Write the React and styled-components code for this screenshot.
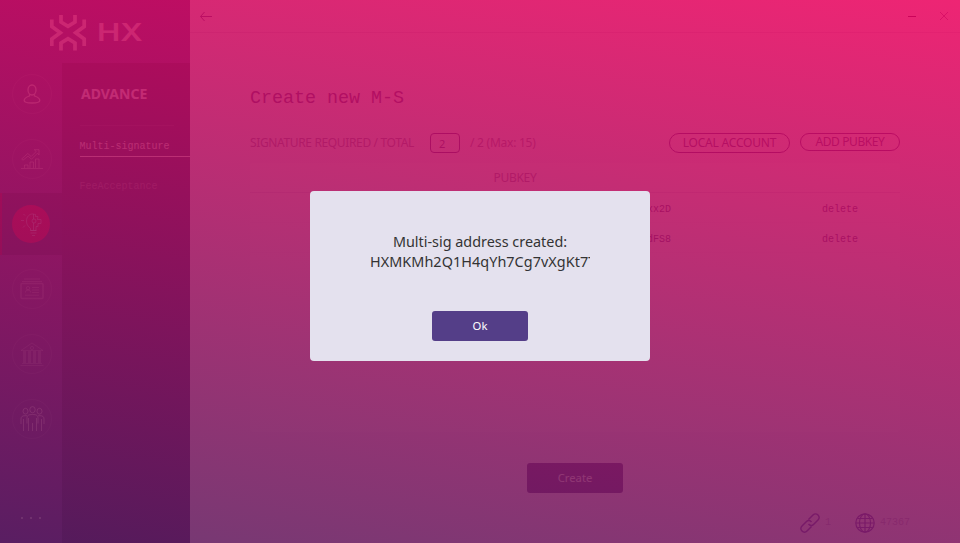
import React from "react";
import styled, { createGlobalStyle } from "styled-components";

const Global = createGlobalStyle`
  * { box-sizing: border-box; }
  body { margin: 0; overflow: hidden; font-family: "Noto Sans", "Open Sans", sans-serif; }
  button { font-family: inherit; padding: 0; margin: 0; }
`;

const mono = `"Liberation Mono", monospace`;

const Window = styled.div`
  position: relative;
  display: flex;
  width: 960px;
  height: 543px;
  overflow: hidden;
  background: #f9f7fc;
`;

const Sidebar = styled.aside`
  display: flex;
  flex-direction: column;
  width: 190px;
  background: #54408a;
`;

const Brand = styled.header`
  display: flex;
  align-items: center;
  height: 63px;
  padding: 2px 0 0 50px;
  gap: 10px;
  color: #eadcf0;
`;

const BrandName = styled.span`
  font: 600 24px/30px Inter, sans-serif;
  transform: scaleX(1.3);
  transform-origin: left center;
`;

const Columns = styled.div`
  display: flex;
  flex: 1;
`;

const Rail = styled.nav`
  display: flex;
  flex-direction: column;
  gap: 3px;
  width: 62px;
`;

const RailItem = styled.div`
  display: flex;
  align-items: center;
  justify-content: center;
  height: 62px;
  padding-right: ${(p) => (p.$active ? 2 : 0)}px;
  border-left: 2px solid ${(p) => (p.$active ? "#90104a" : "transparent")};
  background: ${(p) => (p.$active ? "#2d2f66" : "transparent")};
`;

const RailCircle = styled.div`
  display: grid;
  place-items: center;
  width: ${(p) => (p.$active ? 38 : 40)}px;
  height: ${(p) => (p.$active ? 38 : 40)}px;
  border-radius: 50%;
  border: ${(p) => (p.$active ? 0 : 1)}px solid rgba(255, 255, 255, 0.14);
  background: ${(p) => (p.$active ? "#e01048" : "transparent")};
  color: rgba(255, 255, 255, ${(p) => p.$tone});
`;

const More = styled.div`
  display: flex;
  gap: 7px;
  padding: 64px 0 0 21px;
`;

const Dot = styled.i`
  width: 2px;
  height: 2px;
  background: rgba(255, 255, 255, 0.7);
`;

const SubMenu = styled.div`
  display: flex;
  flex-direction: column;
  width: 128px;
  padding: 20px 0 0 18px;
  background: #2b2c5e;
`;

const SubTitle = styled.h2`
  margin: 0 16px 0 0;
  height: 43px;
  padding-left: 1px;
  font-size: 14px;
  line-height: 22px;
  font-weight: 700;
  color: #f4f0ff;
  border-bottom: 1px solid rgba(255, 255, 255, 0.12);
`;

const SubItem = styled.div`
  height: 31px;
  margin-bottom: 9px;
  padding-top: 11px;
  font: 10px/20px ${mono};
  text-indent: -0.5px;
  color: rgba(255, 255, 255, ${(p) => (p.$active ? 0.95 : 0.35)});
  border-bottom: 1px solid ${(p) => (p.$active ? "#fff" : "transparent")};
`;

const Main = styled.main`
  display: flex;
  flex-direction: column;
  flex: 1;
  color: #7a6a9a;
`;

const TitleBar = styled.div`
  display: flex;
  align-items: center;
  height: 33px;
  padding: 0 11px 0 9px;
  border-bottom: 1px solid #dcd8e8;
  color: #54408a;
`;

const WindowControls = styled.div`
  display: flex;
  gap: 22px;
  margin-left: auto;
`;

const Content = styled.section`
  width: 650px;
  margin-left: 60px;
  height: 460px;
`;

const Title = styled.h1`
  margin: 0;
  padding-top: 53px;
  height: 100px;
  font: 400 18.35px/26px ${mono};
  color: #54408a;
`;

const Toolbar = styled.div`
  display: flex;
  height: 30px;
  font-size: 12px;
  line-height: 20px;
  color: #8b80a8;
`;

const ToolbarLabel = styled.span`
  width: 180px;
  letter-spacing: -0.36px;
  white-space: nowrap;
`;

const MaxLabel = styled.span`
  letter-spacing: -0.25px;
`;

const CountInput = styled.span`
  width: 30px;
  height: 20px;
  margin-right: 10px;
  padding-left: 8px;
  border: 1px solid #54308a;
  border-radius: 4px;
  font-size: 11px;
  line-height: 19px;
  color: #54408a;
`;

const Actions = styled.div`
  display: flex;
  gap: 10px;
  margin-left: auto;
`;

const OutlineButton = styled.button`
  width: ${(p) => p.$w}px;
  height: ${(p) => p.$h}px;
  border: 1px solid #54308a;
  border-radius: 10px;
  background: transparent;
  font-size: 12px;
  letter-spacing: ${(p) => p.$track}px;
  line-height: ${(p) => p.$h - 2}px;
  color: #54408a;
`;

const Table = styled.div`
  height: 269px;
  background: #fff;
  border-radius: 3px;
`;

const Row = styled.div`
  display: grid;
  grid-template-columns: 530px 120px;
  height: 30px;
  text-align: center;
  font: ${(p) => (p.$head ? `12px/30px "Noto Sans", sans-serif` : `10px/33px ${mono}`)};
  letter-spacing: ${(p) => (p.$head ? -0.3 : 0)}px;
  color: ${(p) => (p.$head ? "#8b80a8" : "#54408a")};
  border-bottom: 1px solid ${(p) => (p.$head ? "#e2deee" : "#fbf9fd")};
`;

const Key = styled.span`
  width: 421px;
  text-align: right;
`;

const SolidButton = styled.button`
  display: block;
  width: 96px;
  height: 30px;
  margin: ${(p) => (p.$faded ? "31px 0 0 277px" : "0")};
  border: 0;
  border-radius: 3px;
  background: #543e88;
  color: #fff;
  font-size: 11.3px;
  line-height: 30px;
`;

const StatusBar = styled.footer`
  display: flex;
  align-items: center;
  gap: 5px;
  height: 20px;
  margin: 20px 0 0 610px;
`;

const StatusItem = styled.div`
  display: flex;
  align-items: center;
  gap: 5px;
  width: 50px;
  font: 10px/20px ${mono};
  color: #b9aed0;
  svg { flex: none; color: #6444b0; }
`;

const Veil = styled.div`
  position: absolute;
  inset: 0;
  display: flex;
  justify-content: center;
  align-items: flex-start;
  padding-top: 191px;
  background: linear-gradient(10deg, rgba(90, 24, 91, 0.85), rgba(236, 0, 92, 0.85));
`;

const Dialog = styled.div`
  display: flex;
  flex-direction: column;
  align-items: center;
  width: 340px;
  height: 170px;
  padding-top: 41px;
  border-radius: 4px;
  background: #e4e1ee;
`;

const Message = styled.p`
  width: 220px;
  height: 79px;
  margin: 0;
  overflow: hidden;
  white-space: nowrap;
  text-align: center;
  font-size: 14.4px;
  line-height: 20px;
  color: #333;
`;

const Address = styled.span`
  display: block;
  text-align: left;
  letter-spacing: 0.06px;
`;

const Svg = ({ w, h = w, sw = 1, children }) => (
  <svg width={w} height={h} viewBox={`0 0 ${w} ${h}`} fill="none" stroke="currentColor" strokeWidth={sw}>
    {children}
  </svg>
);

const Logo = () => (
  <Svg w={37} h={36} sw={3.7}>
    <path d="M11 0v7l7 4.300 7-4.300V0M11 35.500v-7.500l7-4.300 7 4.300v7.500M1.800 4.500v7l8.500 6.300-8.500 6.200v7M34.200 4.500v7l-8.500 6.300 8.500 6.200v7" />
  </Svg>
);

const UserIcon = () => (
  <Svg w={18} h={20} sw={1.3}>
    <ellipse cx="9" cy="6" rx="4" ry="5" />
    <path d="M6.500 10.500v1.500c-3 1-5.300 2-5.300 4.500 0 1.500 1.500 2.500 7.800 2.500s7.800-1 7.800-2.500c0-2.500-2.300-3.500-5.300-4.500v-1.500" />
  </Svg>
);

const ChartIcon = () => (
  <Svg w={22} h={20}>
    <path d="M0 19.500h22M3.500 19v-3h3.500v3M9 19v-6h3.500v6M14.500 19v-9H18v9M.700 10l6-5.500 3.500 3 5-5-2-1.800H18v5.300l-1.500-1.800-6 6-3.500-3-5 4z" />
  </Svg>
);

const BulbIcon = () => (
  <Svg w={21} h={24}>
    <path d="M9.500 18.500v-2C6.500 14 5.500 12 5.500 9c0-4.500 3-7 6-7 1.500 0 1.500.500 3 .500v2h2.500l-.500 3H20v4h-3v3h-2v4zM9.500 18.500h6M9.500 21h6M11 23.500h3M12.500 2v5M12.500 11v7M4 3.500 2.500 2M3 8.500H0M4 13.500l-2 2" />
    <circle cx="13" cy="9" r="2" />
  </Svg>
);

const CardIcon = () => (
  <Svg w={24} h={22}>
    <rect x="1" y="5.500" width="22" height="15" rx="1" strokeWidth="1.500" />
    <path d="M2 3.500h20M4 1h16M12 9.500h7M12 12h7M12 14.500h7M5 17.200h14M5.500 14.500c0-2 1-2.500 2.500-2.500s2.500.500 2.500 2.500" />
    <circle cx="8" cy="10.200" r="1.700" />
  </Svg>
);

const BankIcon = () => (
  <Svg w={24} h={25}>
    <path d="M1 8.500 12 1l11 7.500zM2 21.500h20M.500 23.500h23" />
    <path d="M4.500 9v12M9.500 9v12M14.500 9v12M19.500 9v12" strokeWidth="3" />
    <circle cx="12" cy="6" r="1.600" />
  </Svg>
);

const PeopleIcon = () => (
  <Svg w={25} h={26}>
    <ellipse cx="12.500" cy="3.700" rx="2.700" ry="3.100" />
    <ellipse cx="5.500" cy="5.200" rx="2.500" ry="2.900" />
    <ellipse cx="19.500" cy="5.200" rx="2.500" ry="2.900" />
    <path d="M8.500 25V12M16.500 25V12M12.500 25v-8M7 17.500V12c0-2.500 1.500-3.500 5.500-3.500s5.500 1 5.500 3.500v5.500M3.500 25V13M1 18v-5c0-2 1-3.300 4-3.300h2M21.500 25V13M24 18v-5c0-2-1-3.300-4-3.300h-2" />
  </Svg>
);

const LinkIcon = () => (
  <Svg w={20} sw={1.5}>
    <path d="M8.500 6.500 13 2c1.500-1.500 3.500-1.500 5 0s1.500 3.500 0 5l-4.500 4.500c-1.500 1.500-3.500 1.200-5-.500M11.500 13.500 7 18c-1.500 1.500-3.500 1.500-5 0s-1.500-3.500 0-5l4.500-4.500c1.500-1.500 3.500-1.200 5 .500" />
  </Svg>
);

const GlobeIcon = () => (
  <Svg w={20} sw={1.2}>
    <circle cx="10" cy="10" r="9.200" />
    <ellipse cx="10" cy="10" rx="5.500" ry="9.200" />
    <path d="M10 1v18M1 10h18M2.500 5.500h15M2.500 14.500h15" />
  </Svg>
);

const railItems = [
  { Icon: UserIcon, tone: 0.75 },
  { Icon: ChartIcon, tone: 0.5 },
  { Icon: BulbIcon, tone: 0.5, active: true },
  { Icon: CardIcon, tone: 0.32 },
  { Icon: BankIcon, tone: 0.28 },
  { Icon: PeopleIcon, tone: 0.65 },
];

export default function App() {
  return (
    <Window>
      <Global />
      <Sidebar>
        <Brand>
          <Logo />
          <BrandName>HX</BrandName>
        </Brand>
        <Columns>
          <Rail>
            {railItems.map(({ Icon, tone, active }, i) => (
              <RailItem key={i} $active={active}>
                <RailCircle $active={active} $tone={tone}>
                  <Icon />
                </RailCircle>
              </RailItem>
            ))}
            <More>
              <Dot />
              <Dot />
              <Dot />
            </More>
          </Rail>
          <SubMenu>
            <SubTitle>ADVANCE</SubTitle>
            <SubItem $active>Multi-signature</SubItem>
            <SubItem>FeeAcceptance</SubItem>
          </SubMenu>
        </Columns>
      </Sidebar>
      <Main>
        <TitleBar>
          <Svg w={14} h={12}>
            <path d="M1.500 6.500H13M5.500 2 1.500 6.500 5.500 11" />
          </Svg>
          <WindowControls>
            <Svg w={10}>
              <path d="M1 5.500h8" stroke="#30104a" />
            </Svg>
            <Svg w={10}>
              <path d="m1 1 8 8M9 1 1 9" stroke="#8b70a8" />
            </Svg>
          </WindowControls>
        </TitleBar>
        <Content>
          <Title>Create new M-S</Title>
          <Toolbar>
            <ToolbarLabel>SIGNATURE REQUIRED / TOTAL</ToolbarLabel>
            <CountInput>2</CountInput>
            <MaxLabel>/ 2 (Max: 15)</MaxLabel>
            <Actions>
              <OutlineButton $w={121} $h={20} $track={-0.2}>LOCAL ACCOUNT</OutlineButton>
              <OutlineButton $w={100} $h={18} $track={-0.4}>ADD PUBKEY</OutlineButton>
            </Actions>
          </Toolbar>
          <Table>
            <Row $head>
              <span>PUBKEY</span>
            </Row>
            <Row>
              <Key>xx2D</Key>
              <span>delete</span>
            </Row>
            <Row>
              <Key>dFS8</Key>
              <span>delete</span>
            </Row>
          </Table>
          <SolidButton $faded>Create</SolidButton>
        </Content>
        <StatusBar>
          <StatusItem>
            <LinkIcon />1
          </StatusItem>
          <StatusItem>
            <GlobeIcon />47367
          </StatusItem>
        </StatusBar>
      </Main>
      <Veil>
        <Dialog>
          <Message>
            Multi-sig address created:
            <Address>HXMKMh2Q1H4qYh7Cg7vXgKt7T</Address>
          </Message>
          <SolidButton>Ok</SolidButton>
        </Dialog>
      </Veil>
    </Window>
  );
}
